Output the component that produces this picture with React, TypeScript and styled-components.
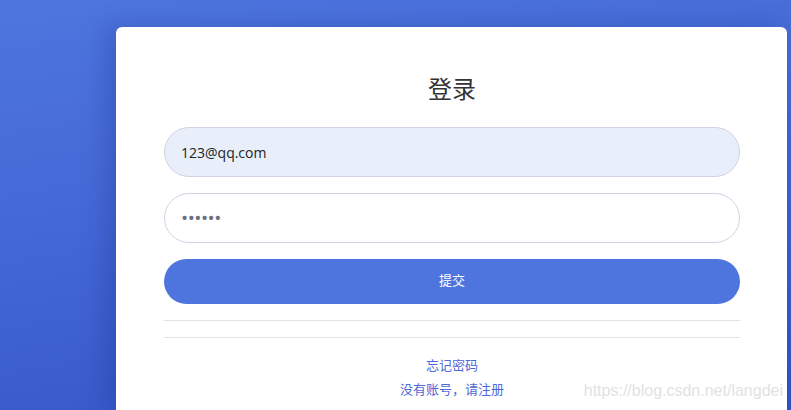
import { FC } from 'react'
import styled, { createGlobalStyle } from 'styled-components'

const GlobalStyle = createGlobalStyle`
  html, body {
    margin: 0;
    padding: 0;
    height: 100%;
    overflow: hidden;
  }
  body {
    background: linear-gradient(170deg, #4e76de 0%, #4467d6 45%, #3152c4 100%);
    font-family: "Open Sans", "Noto Sans CJK SC", sans-serif;
  }
`

const Page = styled.main`
  position: relative;
  height: 410px;
  padding: 27px 4px 0 116px;
  box-sizing: border-box;
`

const Card = styled.section`
  background: #fff;
  border-radius: 6px 6px 0 0;
  height: 383px;
  padding: 45px 47px 0 48px;
  box-sizing: border-box;
  box-shadow: -10px 0 24px rgba(20, 40, 120, 0.25);
  display: flex;
  flex-direction: column;
`

const Title = styled.h1`
  margin: 0 0 23px;
  text-align: center;
  font-family: "Noto Sans CJK SC", sans-serif;
  font-weight: 400;
  font-size: 24px;
  line-height: 32px;
  color: #333;
`

const Form = styled.form`
  display: flex;
  flex-direction: column;
  gap: 16px;
`

const Field = styled.input<{ $secret?: boolean }>`
  height: 50px;
  box-sizing: border-box;
  border: 1px solid #d3d1e3;
  border-radius: 25px;
  padding: 0 16px;
  background: ${p => (p.$secret ? '#fff' : '#e8effb')};
  font-family: "Open Sans", sans-serif;
  font-size: ${p => (p.$secret ? '19px' : '14px')};
  letter-spacing: ${p => (p.$secret ? '-0.5px' : 'normal')};
  color: ${p => (p.$secret ? '#6b7080' : '#222')};
  outline: none;
`

const Submit = styled.button`
  height: 45px;
  border: none;
  border-radius: 23px;
  padding: 0 0 4px;
  background: #4e75de;
  color: #fff;
  font-family: "Noto Sans CJK SC", sans-serif;
  font-size: 13px;
`

const Divider = styled.hr`
  margin: 16px 0 0;
  border: none;
  border-top: 1px solid #e2e2e6;
`

const Links = styled.nav`
  display: flex;
  flex-direction: column;
  align-items: center;
  gap: 5px;
  margin-top: 17px;
`

const LinkText = styled.a`
  font-family: "Noto Sans CJK SC", sans-serif;
  font-size: 13px;
  line-height: 19px;
  color: #4e68d8;
  text-decoration: none;
`

const Watermark = styled.span`
  position: absolute;
  right: 8px;
  bottom: 10px;
  font-family: "Liberation Sans", sans-serif;
  font-size: 16px;
  color: #e2e2e2;
`

const App: FC = () => {
  return (
    <>
      <GlobalStyle />
      <Page>
        <Card>
          <Title>登录</Title>
          <Form onSubmit={e => e.preventDefault()}>
            <Field type="text" defaultValue="123@qq.com" />
            <Field $secret type="password" defaultValue="123456" />
            <Submit type="submit">提交</Submit>
          </Form>
          <Divider />
          <Divider />
          <Links>
            <LinkText href="#">忘记密码</LinkText>
            <LinkText href="#">没有账号，请注册</LinkText>
          </Links>
        </Card>
        <Watermark>https://blog.csdn.net/langdei</Watermark>
      </Page>
    </>
  )
}

export default App
